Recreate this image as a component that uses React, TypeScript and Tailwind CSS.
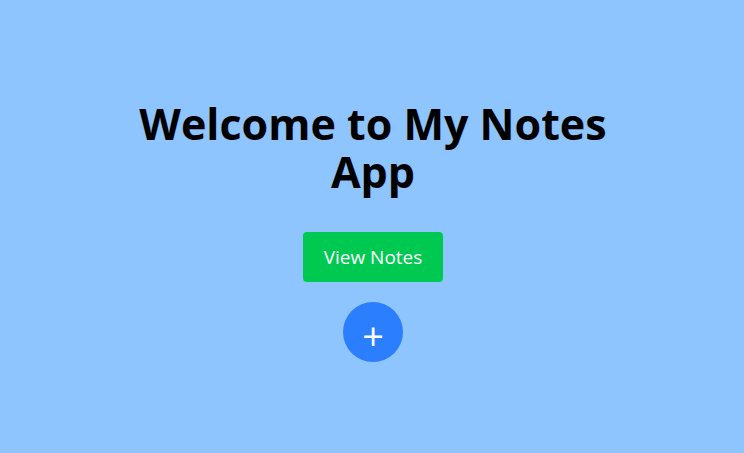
import React from "react";

export default function App() {
  return (
    <div
      className="h-[453px] w-full bg-[#8ec5ff] flex flex-col items-center pt-[100px] pl-[2px]"
      style={{ fontFamily: '"Open Sans", "Noto Sans", sans-serif' }}
    >
      <h1 className="text-[43px] leading-[48px] font-bold text-black text-center max-w-lg">
        Welcome to My Notes App
      </h1>
      <button className="mt-[36px] h-[50px] w-[140px] rounded bg-[#00c951] text-white text-[19px]">
        View Notes
      </button>
      <button className="mt-5 w-[60px] h-[60px] rounded-full bg-[#2b7fff] text-white flex items-center justify-center">
        <span className="text-[38px] leading-none translate-y-[3px]">+</span>
      </button>
    </div>
  );
}
